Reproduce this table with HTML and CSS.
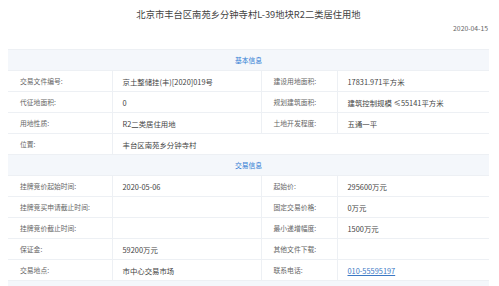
FILE: index.html
```html
<!DOCTYPE html>
<html lang="zh">
<head>
<meta charset="utf-8">
<title>北京市丰台区南苑乡分钟寺村L-39地块R2二类居住用地</title>
<link rel="stylesheet" href="styles.css">
</head>
<body>
<div class="page">
  <h1 class="title">北京市丰台区南苑乡分钟寺村L-39地块R2二类居住用地</h1>
  <div class="date">2020-04-15</div>
  <table class="info">
    <colgroup>
      <col class="c1"><col class="c2"><col class="c3"><col class="c4">
    </colgroup>
    <tr class="sec"><td colspan="4">基本信息</td></tr>
    <tr><td class="lb">交易文件编号:</td><td class="vl">京土整储挂(丰)[2020]019号</td><td class="lb">建设用地面积:</td><td class="vl">17831.971平方米</td></tr>
    <tr><td class="lb">代征地面积:</td><td class="vl">0</td><td class="lb">规划建筑面积:</td><td class="vl">建筑控制规模 ≤55141平方米</td></tr>
    <tr><td class="lb">用地性质:</td><td class="vl">R2二类居住用地</td><td class="lb">土地开发程度:</td><td class="vl">五通一平</td></tr>
    <tr><td class="lb">位置:</td><td class="vl" colspan="3">丰台区南苑乡分钟寺村</td></tr>
    <tr class="sec"><td colspan="4">交易信息</td></tr>
    <tr><td class="lb">挂牌竞价起始时间:</td><td class="vl">2020-05-06</td><td class="lb">起始价:</td><td class="vl">295600万元</td></tr>
    <tr><td class="lb">挂牌竞买申请截止时间:</td><td class="vl"></td><td class="lb">固定交易价格:</td><td class="vl">0万元</td></tr>
    <tr><td class="lb">挂牌竞价截止时间:</td><td class="vl"></td><td class="lb">最小递增幅度:</td><td class="vl">1500万元</td></tr>
    <tr><td class="lb">保证金:</td><td class="vl">59200万元</td><td class="lb">其他文件下载:</td><td class="vl"></td></tr>
    <tr><td class="lb">交易地点:</td><td class="vl">市中心交易市场</td><td class="lb">联系电话:</td><td class="vl"><a class="tel" href="#">010-55595197</a></td></tr>
    <tr class="foot"><td colspan="4"></td></tr>
  </table>
</div>
</body>
</html>
```

FILE: styles.css
```css
html, body {
  margin: 0;
  padding: 0;
  background: #ffffff;
}
body {
  font-family: "Noto Sans CJK SC", "Noto Sans", sans-serif;
  color: #444;
}
.page {
  width: 481px;
  padding: 0 10px 0 8px;
}
.title {
  margin: 0;
  padding-top: 7px;
  height: 15px;
  font-size: 9.3px;
  line-height: 14px;
  font-weight: normal;
  text-align: center;
  color: #444;
}
.date {
  margin-top: 1px;
  height: 26px;
  font-size: 6.8px;
  line-height: 10px;
  text-align: right;
  color: #666;
  padding-right: 1px;
}
.info {
  width: 481px;
  border-collapse: collapse;
  table-layout: fixed;
}
.c1 { width: 104px; }
.c2 { width: 149px; }
.c3 { width: 76px; }
.c4 { width: 152px; }
.info td {
  height: 20px;
  padding: 0;
  border: 1px solid #edf0f4;
  vertical-align: middle;
  white-space: nowrap;
  overflow: hidden;
}
.info tr > td:first-child { border-left: none; }
.info tr > td:last-child { border-right: none; }
.sec td {
  background: #f4f7fb;
  color: #2f7bd3;
  text-align: center;
  font-size: 6.8px;
}
.lb {
  padding-left: 12px !important;
  color: #666;
  font-size: 6.8px;
}
.vl {
  padding-left: 10px !important;
  color: #444;
  font-size: 7.4px;
}
.tel {
  color: #3b78c4;
  text-decoration: underline;
}
.foot td {
  background: #f4f7fb;
  height: 6px;
  border-bottom: none;
}
```
